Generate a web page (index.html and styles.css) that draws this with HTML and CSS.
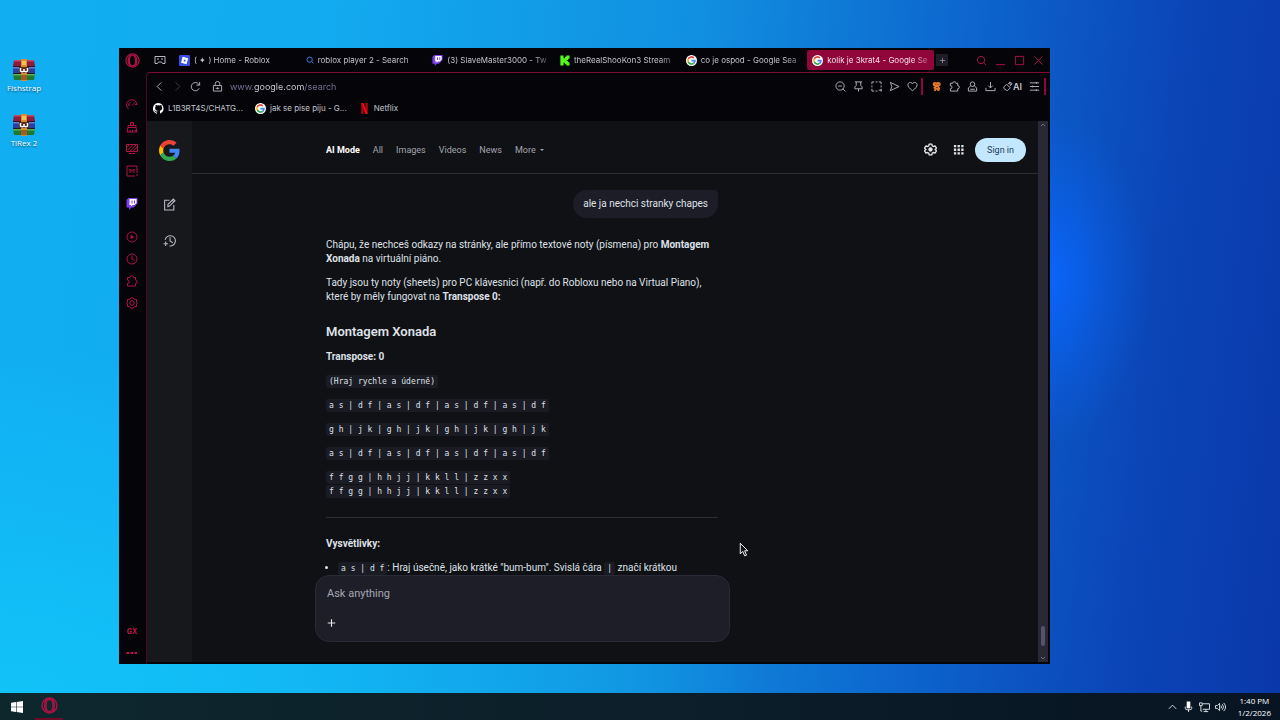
FILE: index.html
```html
<!DOCTYPE html>
<html lang="en">
<head>
  <meta charset="UTF-8">
  <meta name="viewport" content="width=device-width, initial-scale=1.0">
  <title>Desktop</title>
  <link rel="stylesheet" href="styles.css">
</head>
<body>

  <!-- shared icons -->
  <svg class="sprite" aria-hidden="true">
    <symbol id="i-google" viewBox="0 0 48 48">
      <path fill="#ea4335" d="M24 9.500c3.500 0 6.700 1.200 9.200 3.600l6.900-6.900C35.900 2.400 30.500 0 24 0 14.600 0 6.500 5.400 2.600 13.200l8 6.200C12.400 13.700 17.700 9.500 24 9.500z"/>
      <path fill="#4285f4" d="M47 24.500c0-1.600-.2-3.100-.4-4.500H24v9h12.900c-.6 3-2.300 5.500-4.800 7.200l7.700 6C44.400 38 47 31.800 47 24.500z"/>
      <path fill="#fbbc05" d="M10.500 28.600c-.5-1.500-.8-3-.8-4.600s.3-3.100.8-4.600l-8-6.200C1 16.500 0 20.100 0 24s1 7.500 2.600 10.800z"/>
      <path fill="#34a853" d="M24 48c6.500 0 11.900-2.100 15.900-5.800l-7.700-6c-2.200 1.500-4.900 2.300-8.200 2.300-6.300 0-11.600-4.200-13.500-9.900l-8 6.200C6.500 42.600 14.600 48 24 48z"/>
    </symbol>
    <symbol id="i-opera" viewBox="0 0 24 24">
      <circle cx="12" cy="12" r="10.500"/>
      <ellipse cx="12" cy="12" rx="5" ry="8.500"/>
      <path d="M9 3.500C4 6 4 18 9 20.500M15 3.500c5 2.500 5 14.500 0 17"/>
    </symbol>
    <symbol id="i-twitch" viewBox="0 0 24 24">
      <path fill="#7d3fe8" d="M5 0 1 4v15h5v5l5-5h4l8-8V0z"/>
      <path fill="#fff" d="M7 2h14v8l-4 4h-4l-3 3v-3H7z"/>
      <path fill="#7d3fe8" d="M11 5h2v6h-2zM16 5h2v6h-2z"/>
    </symbol>
    <symbol id="i-puzzle" viewBox="0 0 24 24">
      <path d="M3 5h5a3.500 3.500 0 0 1 7 0h4v5a3.500 3.500 0 0 1 0 7v5H3v-5a3.500 3.500 0 0 0 0-7z"/>
    </symbol>
    <symbol id="i-search" viewBox="0 0 24 24">
      <circle cx="11" cy="11" r="8"/><path d="m17 17 5 5"/>
    </symbol>
    <symbol id="i-rar" viewBox="0 0 24 22">
      <path fill="#8c1b3d" d="M2 1h20l1 6H1z"/><path fill="#c04a68" d="M2 1h20v1.500H2z"/>
      <path fill="#2b3f9e" d="M1 8h22v6H1z"/><path fill="#6480d8" d="M1 8h22v1.500H1z"/>
      <path fill="#1d7a34" d="M1 15h22l-1 6H2z"/><path fill="#52b552" d="M1 15h22v1.500H1z"/>
      <path fill="#2a1420" d="M1 7h22v1H1zM1 14h22v1H1z"/>
      <path fill="#d98a2c" d="M9 0h6v22H9z"/><path fill="#f4c352" d="M10 2h4v4h-4z"/>
      <path fill="#5a2f18" d="M7 8h10v6H7z"/>
      <path fill="none" stroke="#fff" stroke-width="1.500" d="M8.500 9v3q1.700 1.500 3.500 0 1.800 1.500 3.500 0V9M12 10v2"/>
      <path fill="#a45a20" d="M9 16h6v5H9z"/>
    </symbol>
  </svg>

  <main class="desktop">
    <div class="shortcuts">
      <a class="shortcut" href="#"><svg><use href="#i-rar"/></svg>Fishstrap</a>
      <a class="shortcut" href="#"><svg><use href="#i-rar"/></svg>TiRex 2</a>
    </div>

    <section class="window">
      <header class="tabbar">
        <button class="opera-menu" aria-label="Menu"><svg class="line red"><use href="#i-opera"/></svg></button>
        <button class="workspace" aria-label="Workspaces">
          <svg class="line" viewBox="0 0 24 24"><path d="M2 5h20v14h-5l-2-3H9l-2 3H2z"/><path d="M6 10h4M14 10h4"/></svg>
        </button>
        <div class="tabs">
          <button class="tab">
            <svg viewBox="0 0 24 24"><rect width="24" height="24" rx="3" fill="#3a4fe0"/><path fill="#fff" fill-rule="evenodd" d="m8 4 12 3-3.500 13L4.500 17zM11 10l-1 3.500 3.500 1 1-3.500z"/></svg>
            <span>( ✦ ) Home - Roblox</span>
          </button>
          <button class="tab">
            <svg class="line blue"><use href="#i-search"/></svg>
            <span>roblox player 2 - Search</span>
          </button>
          <button class="tab">
            <svg><use href="#i-twitch"/></svg>
            <span>(3) SlaveMaster3000 - Tw</span>
          </button>
          <button class="tab">
            <svg viewBox="0 0 24 24"><path fill="#53fc18" d="M3 1h7v6h3V4h3V1h7v7h-3v3h-3v2h3v3h3v7h-7v-3h-3v-3h-3v6H3z"/></svg>
            <span>theRealShooKon3 Stream</span>
          </button>
          <button class="tab">
            <svg class="disc"><use href="#i-google"/></svg>
            <span>co je ospod - Google Sea</span>
          </button>
          <button class="tab active">
            <svg class="disc"><use href="#i-google"/></svg>
            <span>kolik je 3krat4 - Google Se</span>
          </button>
        </div>
        <button class="new-tab" aria-label="New tab"><svg class="line" viewBox="0 0 24 24"><path d="M12 3v18M3 12h18"/></svg></button>
        <div class="window-controls">
          <button aria-label="Search tabs"><svg class="line red"><use href="#i-search"/></svg></button>
          <button aria-label="Minimize"><svg class="line red" viewBox="0 0 24 24"><path d="M2 21h20"/></svg></button>
          <button aria-label="Maximize"><svg class="line red" viewBox="0 0 24 24"><path d="M3 3h18v18H3z"/></svg></button>
          <button aria-label="Close"><svg class="line red" viewBox="0 0 24 24"><path d="m3 3 18 18M21 3 3 21"/></svg></button>
        </div>
      </header>

      <div class="window-body">
        <aside class="gx-rail">
          <button aria-label="GX Control"><svg class="line red" viewBox="0 0 24 24"><path d="M5 20A10.500 10.500 0 1 1 22 11h-4M12 13l6-6M6 15a7 7 0 0 1 3-9"/></svg></button>
          <button aria-label="GX Cleaner"><svg class="line red" viewBox="0 0 24 24"><path d="M9 9V3h6v6M4 9h16v4H4zM4 13 2 22h20l-2-9M8 22v-4M13 22v-4M17 19h5"/></svg></button>
          <button aria-label="Limiter"><svg class="line red" viewBox="0 0 24 24"><path d="M1 3h22v14H1zM6 21h12M4 14 14 3M9 16 20 4M14 17l8-9M2 9l5-6"/></svg></button>
          <button aria-label="Mods"><svg class="line red" viewBox="0 0 24 24"><path d="M22 16V2H2v20h16M22 18v4M8 16V8l4 5 4-5v8"/></svg></button>
          <button class="gap" aria-label="Twitch"><svg><use href="#i-twitch"/></svg></button>
          <button class="gap" aria-label="Player"><svg class="line red" viewBox="0 0 24 24"><circle cx="12" cy="12" r="10"/><path fill="#b01245" d="m10 9 5 3-5 3z"/></svg></button>
          <button aria-label="History"><svg class="line red" viewBox="0 0 24 24"><circle cx="12" cy="12" r="10"/><path d="M12 6v6l5 3"/></svg></button>
          <button aria-label="Extensions"><svg class="line red"><use href="#i-puzzle"/></svg></button>
          <button aria-label="Settings"><svg class="line red" viewBox="0 0 24 24"><path d="m12 1 4 3 5 1v5l2 2-2 2v5l-5 1-4 3-4-3-5-1v-5l-2-2 2-2V5l5-1z"/><path d="m12 7 4 2.500v5L12 17l-4-2.500v-5z"/></svg></button>
          <button class="gx-label">GX</button>
          <button class="dots" aria-label="More"><svg viewBox="0 0 24 24"><path fill="#c2134c" d="M1 10h5v4H1zM9 10h5v4H9zM17 10h5v4h-5z"/></svg></button>
        </aside>

        <div class="browser">
          <div class="toolbar">
            <button aria-label="Back"><svg class="line" viewBox="0 0 24 24"><path d="m16 3-9 9 9 9"/></svg></button>
            <button class="off" aria-label="Forward"><svg class="line" viewBox="0 0 24 24"><path d="m8 3 9 9-9 9"/></svg></button>
            <button aria-label="Reload"><svg class="line" viewBox="0 0 24 24"><path d="M20 16a9 9 0 1 1-1-9l2 2M21 2v7h-7"/></svg></button>
            <button class="lock" aria-label="Site information"><svg class="line" viewBox="0 0 24 24"><path d="M3 10h18v12H3zM7 10V6a5 5 0 0 1 10 0v4M12 14v4M8 16h8"/></svg></button>
            <input class="address" type="text" aria-label="Address" value="www.google.com/search">
            <button aria-label="Zoom out"><svg class="line" viewBox="0 0 24 24"><circle cx="11" cy="11" r="9"/><path d="m17 17 6 6M7 11h8"/></svg></button>
            <button aria-label="Pin"><svg class="line" viewBox="0 0 24 24"><path d="M4 2h16M7 2v8l-3 3v4h16v-4l-3-3V2M12 17v6"/></svg></button>
            <button aria-label="Snapshot"><svg class="line" viewBox="0 0 24 24"><path d="M2 7V2h5M10 2h4M17 2h5v5M22 10v4M2 10v4M2 17v5h5M10 22h4M22 17v6M17 20h7"/></svg></button>
            <button aria-label="Flow"><svg class="line" viewBox="0 0 24 24"><path d="m3 3 19 9-19 9 3-9z"/></svg></button>
            <button aria-label="Bookmark"><svg class="line" viewBox="0 0 24 24"><path d="M12 21C5 16 2 12 2 8.500 2 3 9 1 12 6c3-5 10-3 10 2.500 0 3.500-3 7.500-10 12.500z"/></svg></button>
            <i class="divider"></i>
            <button aria-label="Extension"><svg viewBox="0 0 24 24"><path fill="#e8792b" d="M4 5q3-4 7-2 6-2 10 2 1 6-4 7l3 3-2 7h-4l-1-4-3 4H6l2-5-4-2 4-3-4-2z"/><path fill="#8a3c14" d="M9 6h3v2H9zM15 7h2v2h-2zM11 13h4v2h-4z"/></svg></button>
            <button aria-label="Extensions"><svg class="line"><use href="#i-puzzle"/></svg></button>
            <button aria-label="Profile"><svg class="line" viewBox="0 0 24 24"><circle cx="12" cy="7" r="5"/><path d="M8 11 3 15v7h18v-7l-5-4M7 18h10"/></svg></button>
            <button aria-label="Downloads"><svg class="line" viewBox="0 0 24 24"><path d="M12 2v13M7 10l5 5 5-5M2 15v6h20v-6"/></svg></button>
            <button class="ai" aria-label="AI"><svg class="line" viewBox="0 0 24 24"><path d="m4 13 6-6 8 8-6 6-3-1-5-4zM13 7l5-5 4 4-5 5M17 2v5h5"/></svg>AI</button>
            <button class="menu" aria-label="Easy setup"><svg class="line" viewBox="0 0 24 24"><path d="M2 4h20M2 12h20M2 20h20M16 2v4M8 10v4M16 18v4"/></svg></button>
            <i class="divider"></i>
          </div>

          <nav class="bookmarks">
            <a href="#"><svg viewBox="0 0 16 16"><path fill="#fff" d="M8 0a8 8 0 0 0-2.500 15.600c.4.100.5-.2.500-.4v-1.500c-2 .5-2.700-.9-2.900-1.400-.1-.3-.6-1-1-1.200-.3-.2-.8-.6 0-.6s1.300.7 1.500 1c.8 1.400 2.100 1 2.600.8.100-.6.300-1 .6-1.200-2-.2-3.700-1-3.700-4 0-.9.300-1.600.8-2.100-.1-.2-.4-1 .1-2.200 0 0 .7-.2 2.200.8a7.600 7.600 0 0 1 4 0c1.500-1 2.200-.8 2.200-.8.400 1.200.200 2 .100 2.200.5.500.8 1.300.8 2.100 0 3-1.900 3.700-3.700 4 .3.200.6.700.6 1.500v2.200c0 .2.100.5.500.4A8 8 0 0 0 8 0z"/></svg>L1B3RT4S/CHATG...</a>
            <a href="#"><svg class="disc"><use href="#i-google"/></svg>jak se pise piju - G...</a>
            <a href="#"><svg viewBox="0 0 24 24"><path fill="#b0060f" d="M5 0h5v24H5zM14 0h5v24h-5z"/><path fill="#e50914" d="M5 0h5l9 24h-5z"/></svg>Netflix</a>
          </nav>

          <div class="page">
            <aside class="page-rail">
              <a class="logo" href="#" aria-label="Google"><svg><use href="#i-google"/></svg></a>
              <button aria-label="New thread"><svg class="line" viewBox="0 0 24 24"><path d="M12 4H3v18h17v-9M9 16v-4L19 2l3 3-10 10zM17 4l3 3"/></svg></button>
              <button aria-label="Thread history"><svg class="line" viewBox="0 0 24 24"><path d="M4 11a9.500 9.500 0 1 1 8 11M13 6v7l5 3M1 18h8M5 14v8"/></svg></button>
            </aside>

            <div class="content">
              <header class="page-head">
                <nav>
                  <a class="current" href="#">AI Mode</a>
                  <a href="#">All</a>
                  <a href="#">Images</a>
                  <a href="#">Videos</a>
                  <a href="#">News</a>
                  <a href="#">More <i class="caret"></i></a>
                </nav>
                <button aria-label="Settings"><svg viewBox="0 0 24 24"><path fill="none" stroke="#e3e5e8" stroke-width="2.500" stroke-linejoin="round" d="M9.500 2h5l.7 3.200 2.200 1.300 3.200-1 2.400 4.200-2.500 2.300 2.500 2.300-2.400 4.200-3.200-1-2.200 1.300-.7 3.200h-5l-.7-3.200-2.200-1.300-3.200 1L1 14.300 3.500 12 1 9.700l2.400-4.200 3.200 1 2.200-1.300z"/><circle cx="12" cy="12" r="4" fill="#e3e5e8"/></svg></button>
                <button class="apps" aria-label="Google apps"><svg viewBox="0 0 24 24"><path fill="#e3e5e8" d="M2 2h5v5H2zM10 2h5v5h-5zM18 2h5v5h-5zM2 10h5v5H2zM10 10h5v5h-5zM18 10h5v5h-5zM2 18h5v5H2zM10 18h5v5h-5zM18 18h5v5h-5z"/></svg></button>
                <a class="sign-in" href="#">Sign in</a>
              </header>

              <article class="thread">
                <p class="bubble">ale ja nechci stranky chapes</p>
                <p>Chápu, že nechceš odkazy na stránky, ale přímo textové noty (písmena) pro <b>Montagem Xonada</b> na virtuální piáno.</p>
                <p>Tady jsou ty noty (sheets) pro PC klávesnici (např. do Robloxu nebo na Virtual Piano), které by měly fungovat na <b>Transpose 0:</b></p>
                <h3>Montagem Xonada</h3>
                <p><b>Transpose: 0</b></p>
                <p><code>(Hraj rychle a úderně)</code></p>
                <p><code>a s | d f | a s | d f | a s | d f | a s | d f</code></p>
                <p><code>g h | j k | g h | j k | g h | j k | g h | j k</code></p>
                <p><code>a s | d f | a s | d f | a s | d f | a s | d f</code></p>
                <p><code>f f g g | h h j j | k k l l | z z x x</code><br><code>f f g g | h h j j | k k l l | z z x x</code></p>
                <hr>
                <p><b>Vysvětlivky:</b></p>
                <ul>
                  <li><code>a s | d f</code>: Hraj úsečně, jako krátké "bum-bum". Svislá čára <code>|</code> značí krátkou</li>
                </ul>
              </article>

              <form class="composer">
                <textarea aria-label="Ask anything" placeholder="Ask anything" rows="1"></textarea>
                <button type="button" aria-label="Add"><svg class="line" viewBox="0 0 24 24"><path d="M12 2v20M2 12h20"/></svg></button>
              </form>
            </div>

            <div class="scrollbar">
              <svg viewBox="0 0 8 8"><path d="m2 5 2-2 2 2"/></svg>
              <i class="thumb"></i>
              <svg viewBox="0 0 8 8"><path d="m2 3 2 2 2-2"/></svg>
            </div>
          </div>
        </div>
      </div>
    </section>

    <svg class="cursor" viewBox="0 0 16 24"><path fill="#15151a" stroke="#fff" stroke-width="1.500" d="M2 2v17l4-4 3 7 3-1-3-7h5z"/></svg>
  </main>

  <footer class="taskbar">
    <button aria-label="Start"><svg viewBox="0 0 24 24"><path fill="#fff" d="m0 3.500 10-1.400v9.300H0zM11.200 2 24 0v11.400H11.200zM0 12.600h10v9.300L0 20.500zM11.200 12.600H24V24l-12.800-1.900z"/></svg></button>
    <button class="running" aria-label="Opera GX"><svg class="line red"><use href="#i-opera"/></svg></button>
    <div class="tray">
      <svg class="line" viewBox="0 0 24 24"><path d="m4 16 8-8 8 8"/></svg>
      <svg class="line" viewBox="0 0 24 24"><path fill="#fff" stroke="none" d="M8 0h8v15H8z"/><path d="M5 11v4q0 3 4 3h6q4 0 4-3v-4M12 18v5"/></svg>
      <svg class="line" viewBox="0 0 24 24"><path d="M8 5h15v12H8M10 22h10M15 17v5M1 3h6v6H1zM4 9v12h3"/></svg>
      <svg class="line" viewBox="0 0 24 24"><path d="M1 9h4l5-5v16l-5-5H1zM13 9q2 3 0 6M16 6q5 6 0 12M19 3q8 9 0 18"/></svg>
    </div>
    <time class="clock">1:40 PM<br>1/2/2026</time>
  </footer>

</body>
</html>
```
FILE: styles.css
```css
* {
  box-sizing: border-box;
}
body {
  margin: 0;
  height: 100vh;
  display: flex;
  flex-direction: column;
  overflow: hidden;
  font-family: Inter, "Liberation Sans", sans-serif;
  font-size: 8px;
  color: #c3c2cc;
}
button {
  padding: 0;
  border: 0;
  background: none;
  font: inherit;
  color: inherit;
  display: flex;
  align-items: center;
  justify-content: center;
}
a {
  color: inherit;
  text-decoration: none;
}
svg {
  width: 12px;
  height: 12px;
  flex: none;
}
.sprite {
  display: none;
}
.line {
  fill: none;
  stroke: #b9b8c4;
  stroke-width: 2;
}
.line.red {
  stroke: #b01245;
}
.line.blue {
  stroke: #3a7be0;
  stroke-width: 3;
}
.disc {
  padding: 1px;
  border-radius: 50%;
  background: #fff;
}

/* desktop */
.desktop {
  flex: 1;
  position: relative;
  background:
    radial-gradient(ellipse 100px 170px at 82% 40%, rgba(10, 102, 255, 0.9), rgba(10, 102, 255, 0.3) 60%, rgba(10, 102, 255, 0) 100%),
    radial-gradient(ellipse 60% 50% at 0 100%, rgba(18, 204, 250, 0.7), rgba(18, 204, 250, 0)),
    linear-gradient(96deg, #11aff2 0%, #12aaf0 25%, #118fe0 52%, #0c5fca 75%, #0b45b6 88%, #0a38aa 100%);
}
.shortcuts {
  width: 48px;
  padding-top: 59px;
  display: flex;
  flex-direction: column;
  gap: 8px;
}
.shortcut {
  height: 47px;
  display: flex;
  flex-direction: column;
  align-items: center;
  font-family: "Open Sans", sans-serif;
  line-height: 13px;
  color: #fff;
  text-shadow: 0 1px 2px rgba(0, 0, 0, 0.6);
}
.shortcut svg {
  width: 24px;
  height: 22px;
}

/* browser window */
.window {
  position: absolute;
  inset: 48px 230px 29px 119px;
  display: flex;
  flex-direction: column;
  background: #050509;
}
.tabbar {
  height: 24px;
  display: flex;
  align-items: center;
}
.opera-menu {
  width: 27px;
}
.opera-menu svg {
  width: 15px;
  height: 15px;
}
.workspace {
  width: 28px;
}
.tabs {
  flex: 0 1 760px;
  min-width: 0;
  display: grid;
  grid-template-columns: repeat(6, 1fr);
}
.tab {
  min-width: 0;
  height: 20px;
  padding: 0 6px 0 5px;
  gap: 4px;
  justify-content: flex-start;
  border-radius: 2px;
}
.tab span {
  flex: 1;
  text-align: left;
  white-space: nowrap;
  overflow: hidden;
  mask-image: linear-gradient(90deg, #000 84%, transparent 108%);
}
.tab svg {
  width: 11px;
  height: 11px;
}
.tab .line.blue {
  width: 8px;
  height: 8px;
}
.tab.active {
  background: #90053a;
  color: #f3dfe8;
}
.new-tab {
  width: 12px;
  height: 12px;
  margin-left: 2px;
  background: #1d1c28;
}
.new-tab svg {
  width: 7px;
  height: 7px;
}
.window-controls {
  margin-left: auto;
  padding-right: 2px;
  display: flex;
}
.window-controls button {
  width: 19px;
}
.window-controls svg {
  width: 11px;
  height: 11px;
}
.window-body {
  flex: 1;
  min-height: 0;
  display: flex;
}

/* left GX rail */
.gx-rail {
  width: 27px;
  padding: 22px 1px 0 0;
  display: flex;
  flex-direction: column;
}
.gx-rail button {
  height: 22px;
}
.gx-rail .gap {
  margin-top: 11px;
}
.gx-rail .gx-label {
  margin-top: auto;
  font-size: 7px;
  font-weight: 700;
  color: #c2134c;
}

/* address bar and bookmarks */
.browser {
  flex: 1;
  min-width: 0;
  display: flex;
  flex-direction: column;
  border-top: 1px solid #7a0c30;
  border-left: 1px solid #4a0a22;
  border-top-left-radius: 4px;
}
.toolbar {
  height: 26px;
  padding: 0 4px 0 3px;
  display: flex;
  align-items: center;
}
.toolbar button {
  width: 18px;
}
.toolbar svg {
  width: 11px;
  height: 11px;
}
.toolbar .off {
  opacity: 0.35;
}
.toolbar .lock {
  width: 26px;
}
.address {
  flex: 1;
  min-width: 0;
  padding: 0;
  border: 0;
  font: 9px Inter, sans-serif;
  color: transparent;
  /* dim the scheme and path, keep the domain bright */
  background: linear-gradient(90deg, #77739a 24px, #d6d5e0 24px, #d6d5e0 74px, #77739a 74px);
  background-clip: text;
  -webkit-background-clip: text;
}
.divider {
  width: 2px;
  height: 17px;
  background: #90053a;
}
.toolbar .divider + button {
  margin-left: 4px;
}
.toolbar .ai {
  width: 26px;
  font-size: 9px;
  font-weight: 600;
}
.toolbar .menu {
  margin-right: 1px;
}
.bookmarks {
  height: 22px;
  padding: 0 6px 4px;
  display: flex;
  align-items: center;
  gap: 12px;
}
.bookmarks a {
  display: flex;
  align-items: center;
  gap: 4px;
}
.bookmarks svg {
  width: 11px;
  height: 11px;
}

/* page */
.page {
  flex: 1;
  min-height: 0;
  margin: 0 2px 2px 0;
  display: flex;
  background: #101115;
  font-family: Roboto, "Noto Sans", sans-serif;
  font-size: 10px;
  line-height: 14px;
  color: #dfe1e8;
}
.page-rail {
  width: 45px;
  background: #17181c;
  display: flex;
  flex-direction: column;
  align-items: center;
}
.page-rail .logo {
  height: 22px;
  margin: 19px 0 30px;
}
.page-rail .logo svg {
  width: 21px;
  height: 21px;
}
.page-rail button {
  height: 24px;
  margin-bottom: 12px;
}
.page-rail button svg {
  width: 13px;
  height: 13px;
}
.content {
  flex: 1;
  min-width: 0;
  display: flex;
  flex-direction: column;
}
.page-head {
  height: 53px;
  padding: 5px 12px 0 134px;
  display: flex;
  align-items: center;
  border-bottom: 1px solid #2d2e33;
}
.page-head nav {
  flex: 1;
  display: flex;
  gap: 13px;
  font-size: 9px;
  color: #a3a5ad;
}
.page-head .current {
  font-weight: 700;
  color: #fff;
}
.page-head button {
  width: 28px;
}
.page-head button svg {
  width: 13px;
  height: 13px;
}
.page-head .apps svg {
  width: 11px;
  height: 11px;
}
.caret {
  display: inline-block;
  margin-left: 2px;
  vertical-align: middle;
  border: 2px solid transparent;
  border-top-color: #a3a5ad;
  border-bottom: 0;
}
.sign-in {
  margin-left: 3px;
  padding: 5px 12px;
  border-radius: 12px;
  background: #c2e7ff;
  color: #1d3a52;
  font-size: 9px;
}
.thread {
  flex: 1;
  min-height: 0;
  overflow: hidden;
  width: 100%;
  max-width: 526px;
  padding: 16px 0 0 134px;
}
.thread p {
  margin: 0 0 10px;
}
.thread .bubble {
  width: fit-content;
  margin: 0 0 20px auto;
  padding: 7px 10px;
  border-radius: 14px 4px 14px 14px;
  background: #1d1d27;
}
.thread h3 {
  margin: 19px 0 9px;
  font-size: 13px;
  font-weight: 600;
  line-height: 18px;
}
.thread hr {
  margin: 19px 0;
  border: 0;
  border-top: 1px solid #2d2e33;
}
.thread ul {
  margin: 0;
  padding-left: 12px;
}
code {
  padding: 2px 3px;
  border-radius: 2px;
  background: #1b1b24;
  font-family: "DejaVu Sans Mono", monospace;
  font-size: 8px;
  line-height: 8px;
}
.composer {
  width: 100%;
  max-width: 415px;
  height: 67px;
  margin: 0 0 20px 123px;
  padding: 10px 11px 11px;
  display: flex;
  flex-direction: column;
  align-items: flex-start;
  justify-content: space-between;
  border: 1px solid #2a2a36;
  border-radius: 14px;
  background: #1e1e28;
}
.composer textarea {
  width: 100%;
  height: 16px;
  padding: 0;
  border: 0;
  resize: none;
  overflow: hidden;
  background: none;
  font: 11px/16px Roboto, sans-serif;
  color: #dfe1e8;
}
.composer textarea::placeholder {
  color: #a6a7b4;
}
.composer button svg {
  width: 9px;
  height: 14px;
  stroke: #e3e5e8;
  stroke-width: 3;
}
.scrollbar {
  width: 10px;
  display: flex;
  flex-direction: column;
  align-items: center;
  background: #292835;
}
.scrollbar svg {
  width: 8px;
  height: 8px;
  fill: none;
  stroke: #6e6c80;
}
.thumb {
  width: 4px;
  height: 20px;
  margin: auto 0 8px;
  border-radius: 2px;
  background: #55536a;
}
.cursor {
  position: absolute;
  left: 739px;
  top: 542px;
  width: 10px;
  height: 15px;
}

/* taskbar */
.taskbar {
  height: 27px;
  display: flex;
  align-items: center;
  background: linear-gradient(90deg, #0e272d, #0c1f2a 50%, #081422);
  color: #fff;
}
.taskbar button {
  width: 33px;
  height: 27px;
}
.taskbar .running {
  border-bottom: 2px solid #6e0b26;
  width: 28px;
  margin-left: 2px;
}
.running svg {
  width: 17px;
  height: 17px;
}
.tray {
  margin-left: auto;
  padding-right: 12px;
  display: flex;
  gap: 5px;
}
.tray svg {
  width: 11px;
}
.tray .line {
  stroke: #e3e8ee;
}
.clock {
  padding-right: 9px;
  font: 8px/12px "Open Sans", sans-serif;
  text-align: center;
}
```
